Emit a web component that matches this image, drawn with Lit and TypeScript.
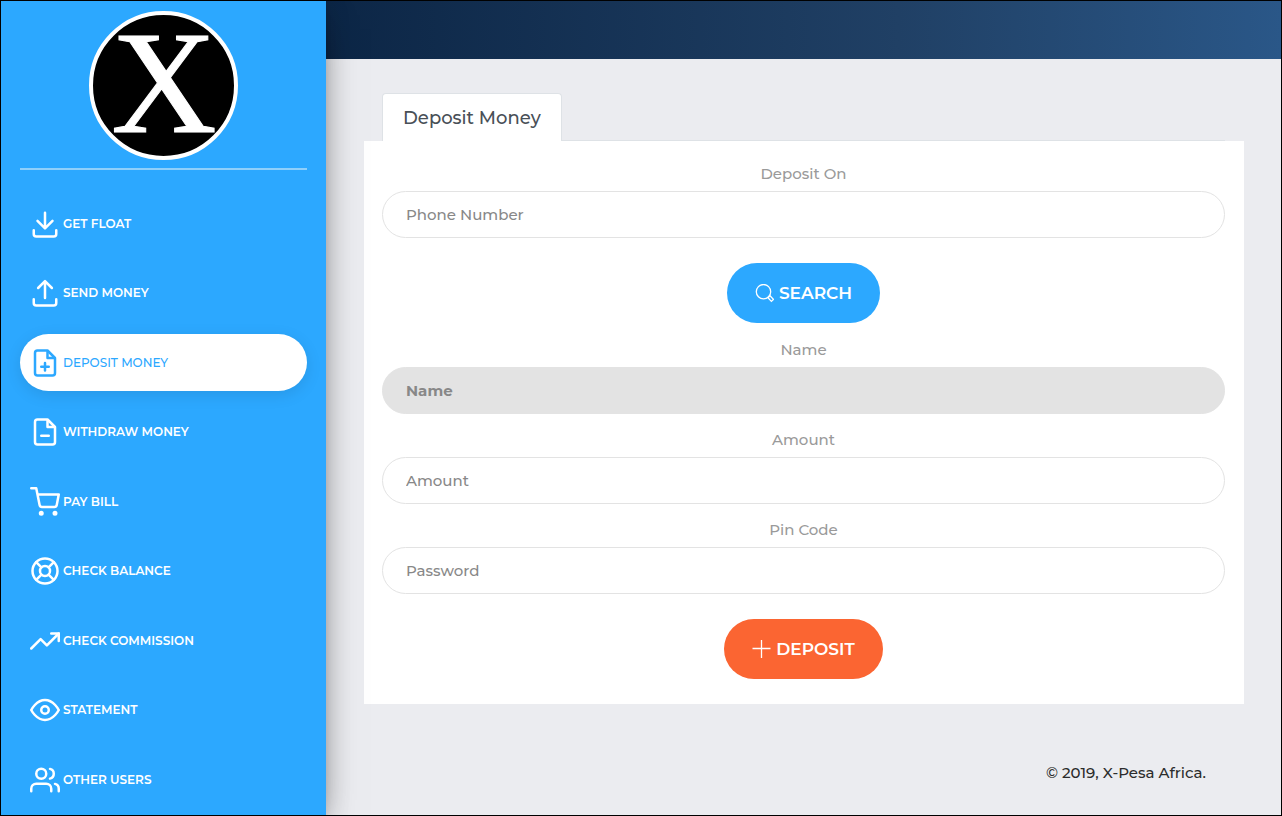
import { LitElement, html, css, svg } from "lit";
import { customElement, state } from "lit/decorators.js";
import { classMap } from "lit/directives/class-map.js";

const icons = {
  download: svg`<path d="M3 17v3a2 2 0 0 0 2 2h14a2 2 0 0 0 2-2v-3"/><path d="M6 9.5l6 6 6-6M12 3v12"/>`,
  upload: svg`<path d="M3 17v3a2 2 0 0 0 2 2h14a2 2 0 0 0 2-2v-3"/><path d="M17.5 8L12 2.5 6.5 8M12 3v13"/>`,
  filePlus: svg`<path d="M14 2H6a2 2 0 0 0-2 2v16a2 2 0 0 0 2 2h12a2 2 0 0 0 2-2V8z"/><path d="M14 3v5h5M12 18v-6M9 15h6"/>`,
  fileMinus: svg`<path d="M14 2H6a2 2 0 0 0-2 2v16a2 2 0 0 0 2 2h12a2 2 0 0 0 2-2V8z"/><path d="M14 3v5h5M9 15h6"/>`,
  cart: svg`<circle cx="9" cy="21" r="1"/><circle cx="20" cy="21" r="1"/><path d="M1 1h4l2.68 13.39a2 2 0 0 0 2 1.61h9.72a2 2 0 0 0 2-1.61L23 6H6"/>`,
  buoy: svg`<circle cx="12" cy="12" r="10"/><circle cx="12" cy="12" r="4"/><path d="M4.93 4.93l4.24 4.24M14.83 14.83l4.24 4.24M14.83 9.17l4.24-4.24M4.93 19.07l4.24-4.24"/>`,
  trend: svg`<path d="M23 6l-9.5 9.5-5-5L1 18"/><path d="M17 6h6v6"/>`,
  eye: svg`<path d="M1 12s4-8 11-8 11 8 11 8-4 8-11 8S1 12 1 12z"/><circle cx="12" cy="12" r="3"/>`,
  users: svg`<path d="M17 21v-2a4 4 0 0 0-4-4H5a4 4 0 0 0-4 4v2"/><circle cx="9" cy="7" r="4"/><path d="M23 21v-2a4 4 0 0 0-3-3.87M16 3.13a4 4 0 0 1 0 7.75"/>`,
};

const items: { label: string; icon: keyof typeof icons }[] = [
  { label: "Get Float", icon: "download" },
  { label: "Send Money", icon: "upload" },
  { label: "Deposit Money", icon: "filePlus" },
  { label: "Withdraw Money", icon: "fileMinus" },
  { label: "Pay Bill", icon: "cart" },
  { label: "Check Balance", icon: "buoy" },
  { label: "Check Commission", icon: "trend" },
  { label: "Statement", icon: "eye" },
  { label: "Other Users", icon: "users" },
];

@customElement("side-menu")
export class SideMenu extends LitElement {
  @state() private active = "Deposit Money";

  static styles = css`
    :host {
      display: flex;
      flex-direction: column;
      box-sizing: border-box;
      padding: 0 19px;
      background: #2ca8ff;
    }
    .brand {
      display: flex;
      justify-content: center;
      padding: 10px 0 8px;
      border-bottom: 2px solid #8fd0fb;
    }
    .logo {
      display: block;
      width: 149px;
      height: 149px;
      overflow: visible;
    }
    .letter {
      font-family: "Liberation Serif", serif;
      font-size: 146px;
    }
    .menu {
      flex: 1;
      display: flex;
      flex-direction: column;
      justify-content: space-between;
      list-style: none;
      margin: 0;
      padding: 25px 0 7px;
    }
    .link {
      display: flex;
      align-items: center;
      gap: 3px;
      height: 57px;
      padding: 0 10px;
      border-radius: 30px;
      color: #fff;
      font-size: 12px;
      font-weight: 600;
      line-height: 20px;
      text-transform: uppercase;
      text-decoration: none;
    }
    .link.active {
      background: #fff;
      color: #2ca8ff;
      font-weight: 500;
      box-shadow: 0 4px 16px rgba(0, 0, 0, 0.1);
    }
    .icon {
      flex: none;
      width: 30px;
      height: 30px;
      fill: none;
      stroke: currentColor;
      stroke-width: 2;
      stroke-linecap: round;
      stroke-linejoin: round;
    }
  `;

  render() {
    return html`
      <div class="brand">
        <svg class="logo" viewBox="0 0 149 149" role="img" aria-label="X-Pesa">
          <circle cx="74.5" cy="74.5" r="72.5" fill="#000" stroke="#fff" stroke-width="4" />
          <text class="letter" x="75" y="121" text-anchor="middle" fill="#fff" stroke="#fff" stroke-width="1">X</text>
        </svg>
      </div>
      <ul class="menu">
        ${items.map(
          (item) => html`<li>
            <a
              class=${classMap({ link: true, active: item.label === this.active })}
              href="#"
              @click=${(e: Event) => {
                e.preventDefault();
                this.active = item.label;
              }}
            >
              <svg class="icon" viewBox="0 0 24 24" aria-hidden="true">${icons[item.icon]}</svg>
              <span>${item.label}</span>
            </a>
          </li>`
        )}
      </ul>
    `;
  }
}

@customElement("deposit-form")
export class DepositForm extends LitElement {
  static styles = css`
    :host {
      display: block;
    }
    .tabs {
      display: flex;
      margin: 0 19px 0 18px;
    }
    .tab {
      height: 48px;
      padding: 0 20px;
      border: 1px solid #dee2e6;
      border-bottom: 0;
      border-radius: 4px 4px 0 0;
      background: #fff;
      color: #495057;
      font: inherit;
      font-size: 18px;
      font-weight: 500;
    }
    .rule {
      flex: 1;
      border-bottom: 1px solid #dee2e6;
    }
    .card {
      display: flex;
      flex-direction: column;
      margin: 0;
      padding: 23px 19px 25px 18px;
      background: #fff;
    }
    .label {
      margin-bottom: 7px;
      color: #9a9a9a;
      font-size: 15px;
      font-weight: 500;
      line-height: 20px;
      text-align: center;
    }
    .input {
      box-sizing: border-box;
      width: 100%;
      height: 47px;
      margin: 0 0 16px;
      padding: 0 23px;
      border: 1px solid #e3e3e3;
      border-radius: 30px;
      background: #fff;
      color: #2c2c2c;
      font: inherit;
      font-size: 15px;
      font-weight: 500;
    }
    .input::placeholder {
      color: #888;
      opacity: 1;
    }
    .input:disabled {
      background: #e3e3e3;
      font-weight: 700;
    }
    .input.last {
      margin-bottom: 25px;
    }
    .button {
      align-self: center;
      display: flex;
      align-items: center;
      gap: 5px;
      height: 60px;
      padding: 0 28px;
      border: 0;
      border-radius: 30px;
      color: #fff;
      font: inherit;
      font-size: 17px;
      font-weight: 600;
      text-transform: uppercase;
    }
    .search {
      margin-bottom: 17px;
      background: #2ca8ff;
    }
    .deposit {
      background: #fb6532;
    }
    .glyph {
      width: 19px;
      height: 19px;
      fill: none;
      stroke: currentColor;
      stroke-width: 1.3;
    }
  `;

  render() {
    return html`
      <div class="tabs" role="tablist">
        <button class="tab" role="tab" aria-selected="true">Deposit Money</button>
        <div class="rule"></div>
      </div>
      <form class="card" @submit=${(e: Event) => e.preventDefault()}>
        <label class="label" for="phone">Deposit On</label>
        <input class="input last" id="phone" type="tel" placeholder="Phone Number" />
        <button class="button search" type="button">
          <svg class="glyph" viewBox="0 0 19 19" aria-hidden="true">
            <circle cx="8.5" cy="7.7" r="7.2" />
            <path d="M13 13.8l2-2 3.4 3.6-2 2z" />
          </svg>
          <span>Search</span>
        </button>
        <label class="label" for="name">Name</label>
        <input class="input" id="name" type="text" placeholder="Name" disabled />
        <label class="label" for="amount">Amount</label>
        <input class="input" id="amount" type="text" placeholder="Amount" />
        <label class="label" for="pin">Pin Code</label>
        <input class="input last" id="pin" type="password" placeholder="Password" />
        <button class="button deposit" type="submit">
          <svg class="glyph" viewBox="0 0 19 19" aria-hidden="true">
            <path d="M9.5 0v18M.5 8.5h18" />
          </svg>
          <span>Deposit</span>
        </button>
      </form>
    `;
  }
}

@customElement("app-root")
export class AppRoot extends LitElement {
  static styles = css`
    :host {
      display: flex;
      box-sizing: border-box;
      min-height: 100vh;
      border: 1px solid #000;
      overflow: hidden;
      background: #ebecf0;
      font-family: Montserrat, Inter, "Open Sans", sans-serif;
    }
    .side {
      flex: none;
      width: 325px;
      z-index: 1;
      box-shadow: 0 16px 38px -12px rgba(0, 0, 0, 0.56), 0 4px 25px 0 rgba(0, 0, 0, 0.12),
        0 8px 10px -5px rgba(0, 0, 0, 0.2);
    }
    .main {
      flex: 1;
      min-width: 0;
    }
    .bar {
      height: 58px;
      background: linear-gradient(to right, #0c2646 0, #204065 60%, #2a5788);
    }
    .content {
      padding: 34px 37px 0 38px;
    }
    .footer {
      padding: 59px 75px 20px;
      color: #2c2c2c;
      font-size: 15px;
      font-weight: 500;
      line-height: 20px;
      text-align: right;
    }
  `;

  render() {
    return html`
      <side-menu class="side"></side-menu>
      <div class="main">
        <header class="bar"></header>
        <main class="content"><deposit-form></deposit-form></main>
        <footer class="footer">© 2019, X-Pesa Africa.</footer>
      </div>
    `;
  }
}
